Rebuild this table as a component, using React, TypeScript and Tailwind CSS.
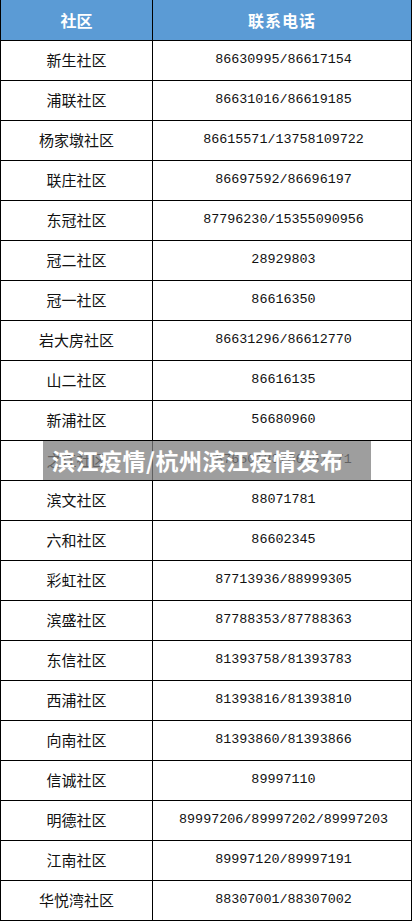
const rows: { name: string; phone: string }[] = [
  { name: '新生社区', phone: '86630995/86617154' },
  { name: '浦联社区', phone: '86631016/86619185' },
  { name: '杨家墩社区', phone: '86615571/13758109722' },
  { name: '联庄社区', phone: '86697592/86696197' },
  { name: '东冠社区', phone: '87796230/15355090956' },
  { name: '冠二社区', phone: '28929803' },
  { name: '冠一社区', phone: '86616350' },
  { name: '岩大房社区', phone: '86631296/86612770' },
  { name: '山二社区', phone: '86616135' },
  { name: '新浦社区', phone: '56680960' },
  { name: '之江社区', phone: '87650183/86651171' },
  { name: '滨文社区', phone: '88071781' },
  { name: '六和社区', phone: '86602345' },
  { name: '彩虹社区', phone: '87713936/88999305' },
  { name: '滨盛社区', phone: '87788353/87788363' },
  { name: '东信社区', phone: '81393758/81393783' },
  { name: '西浦社区', phone: '81393816/81393810' },
  { name: '向南社区', phone: '81393860/81393866' },
  { name: '信诚社区', phone: '89997110' },
  { name: '明德社区', phone: '89997206/89997202/89997203' },
  { name: '江南社区', phone: '89997120/89997191' },
  { name: '华悦湾社区', phone: '88307001/88307002' },
];

export default function App() {
  return (
    <div className="relative w-[416px] min-h-[921px] bg-white font-['Noto_Sans_CJK_SC',sans-serif]">
      <div className="w-[412px] border-l border-r border-b border-black">
        <div className="flex h-[40px] bg-[#5b9bd5] text-white font-bold text-[16px]">
          <div className="w-[152px] border-r border-black flex items-center justify-center">社区</div>
          <div className="flex-1 flex items-center justify-center tracking-[1px]">联系电话</div>
        </div>
        {rows.map((r) => (
          <div key={r.name} className="flex h-[40px] border-t border-black text-[#111]">
            <div className="w-[152px] border-r border-black flex items-center justify-center text-[15px]">
              {r.name}
            </div>
            <div className="flex-1 flex items-center justify-center pl-[3px] font-['Liberation_Mono',monospace] text-[13.4px]">
              {r.phone}
            </div>
          </div>
        ))}
      </div>
      <div className="absolute left-[43px] top-[441px] w-[328px] h-[39px] bg-[rgba(125,125,125,0.75)] flex items-center pl-[9px]">
        <span className="text-white font-bold text-[23px] leading-none tracking-[0.5px]">滨江疫情/杭州滨江疫情发布</span>
      </div>
    </div>
  );
}
